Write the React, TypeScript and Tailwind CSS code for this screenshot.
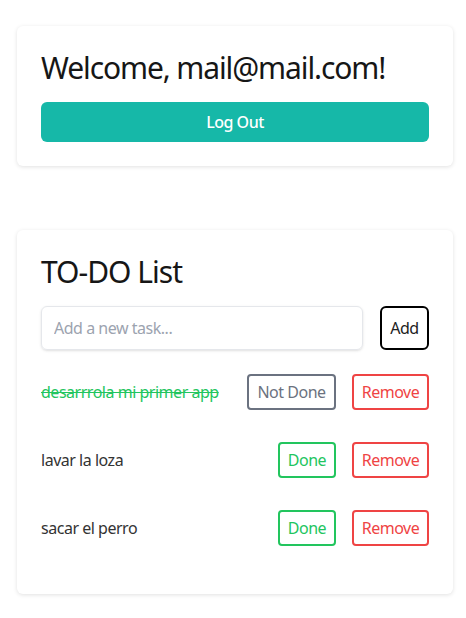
const tasks = [
    { text: "desarrrola mi primer app", done: true },
    { text: "lavar la loza", done: false },
    { text: "sacar el perro", done: false },
];

export default function App() {
    return (
        <div className="bg-white pl-[17px] pr-[13px] pt-[26px] pb-6 font-['Noto_Sans',sans-serif] tracking-[-0.03em]">
            <div className="rounded-md bg-white p-6 shadow-[0_1px_4px_rgba(0,0,0,0.12)]">
                <h1 className="text-[30px] leading-9 tracking-[-0.037em] text-[#161616]">Welcome, mail@mail.com!</h1>
                <button className="mt-4 h-10 w-full rounded-md bg-[#16b8a8] font-medium text-white">
                    Log Out
                </button>
            </div>

            <div className="mt-16 rounded-md bg-white p-6 pb-12 shadow-[0_1px_4px_rgba(0,0,0,0.12)]">
                <h2 className="text-[30px] leading-9 tracking-[-0.033em] text-[#161616]">TO-DO List</h2>
                <div className="mt-4 flex gap-[17px]">
                    <input
                        className="h-11 flex-1 rounded-md border border-gray-200 px-3 shadow-sm outline-none placeholder:text-[#9ca3af]"
                        type="text"
                        placeholder="Add a new task..."
                    />
                    <button className="h-11 w-[49px] rounded-md border-2 border-black text-[#222]">Add</button>
                </div>
                <div className="mt-6 flex flex-col gap-8">
                    {tasks.map((t) => (
                        <div key={t.text} className="flex items-center">
                            <span className={t.done ? "flex-1 text-[#22c55e] line-through" : "flex-1 text-[#333]"}>
                                {t.text}
                            </span>
                            {t.done ? (
                                <button className="h-9 w-[89px] rounded border-2 border-[#6b7280] text-[#6b7280]">Not Done</button>
                            ) : (
                                <button className="h-9 w-[58px] rounded border-2 border-[#22c55e] text-[#22c55e]">Done</button>
                            )}
                            <button className="ml-4 h-9 w-[77px] rounded border-2 border-[#ef4444] text-[#ef4444]">Remove</button>
                        </div>
                    ))}
                </div>
            </div>
        </div>
    );
}
